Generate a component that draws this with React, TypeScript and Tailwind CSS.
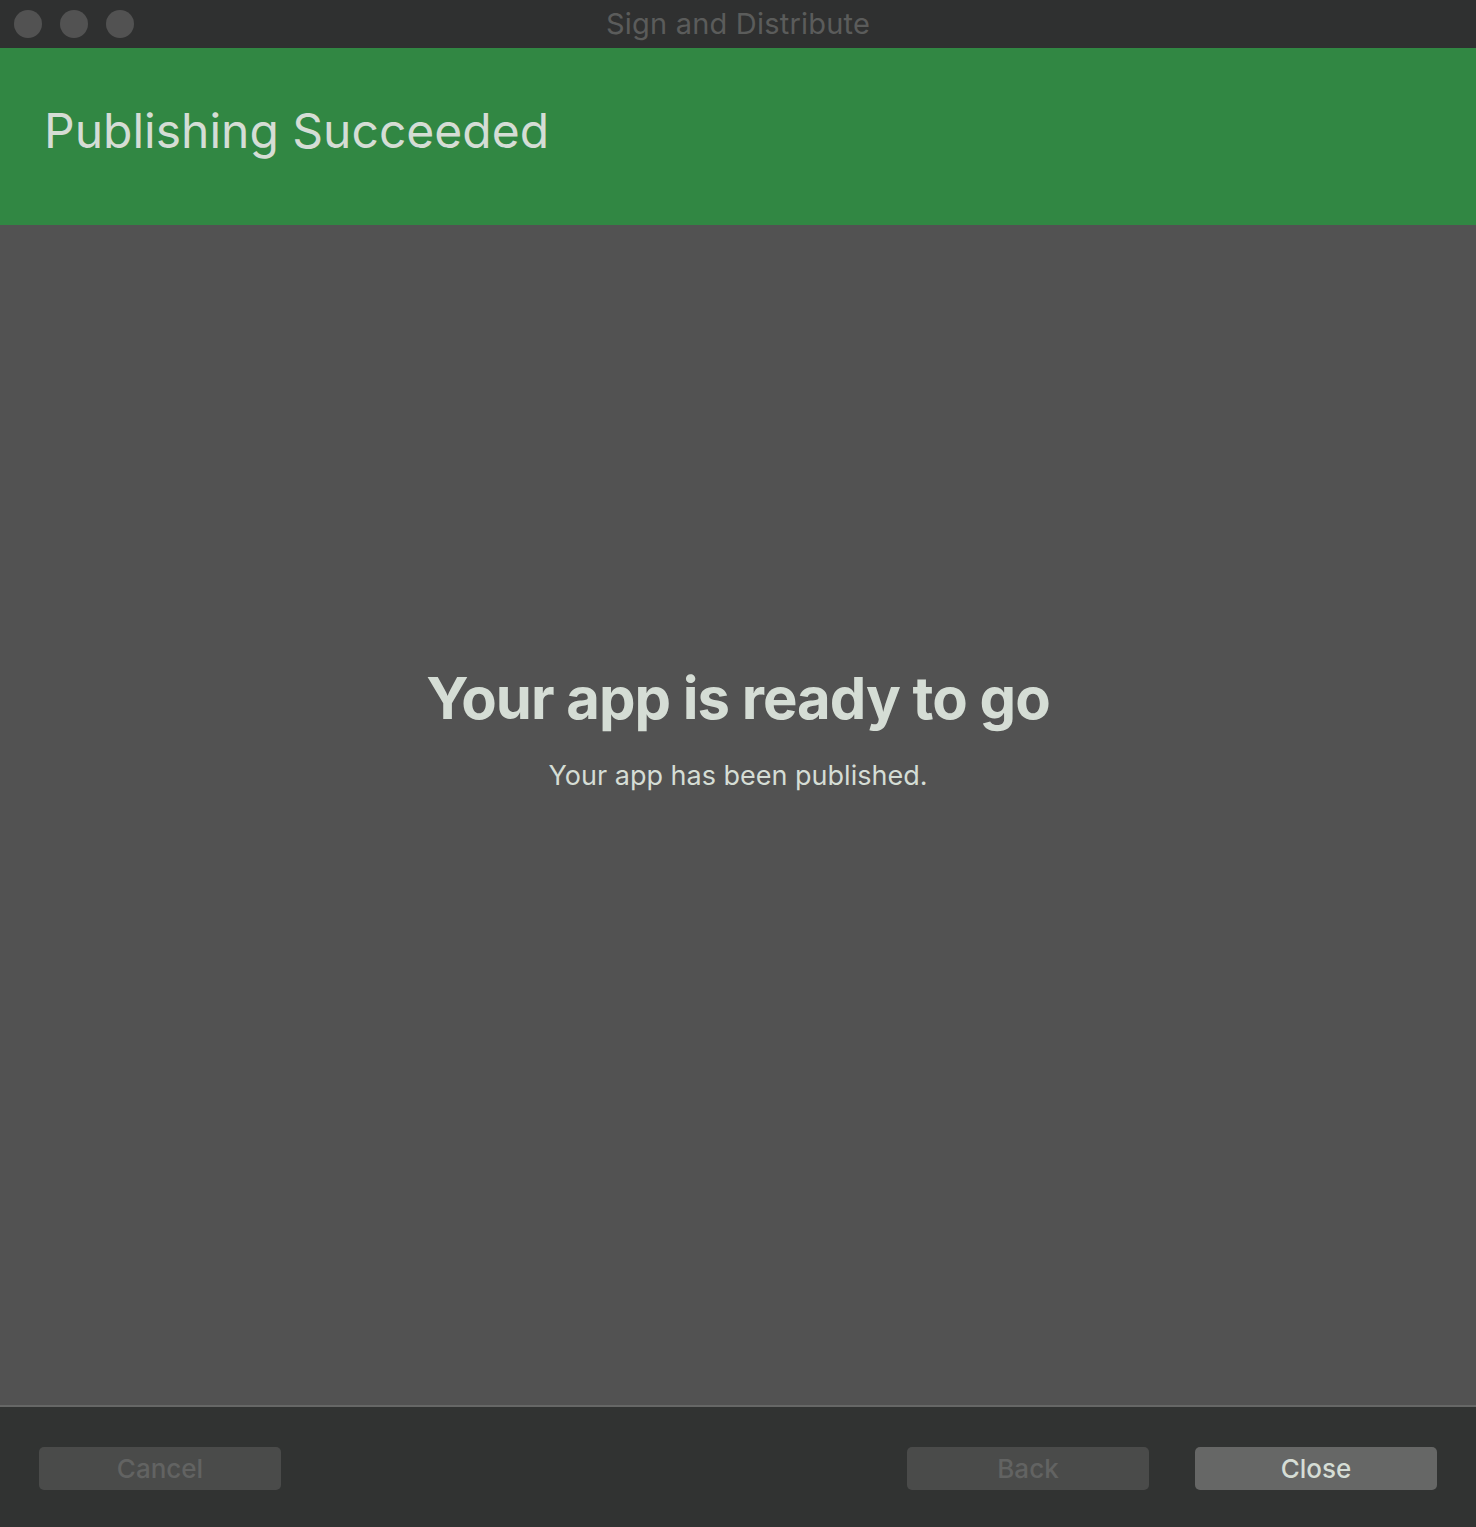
export default function App() {
  return (
    <div
      className="flex flex-col h-[1527px] w-full bg-[#525252]"
      style={{ fontFamily: "Inter, 'Noto Sans', sans-serif" }}
    >
      {/* Title bar */}
      <div className="relative flex items-center justify-center h-[48px] bg-[#2f3030] shrink-0">
        <div className="absolute left-[14px] top-[10px] flex gap-[18px]">
          <span className="w-[28px] h-[28px] rounded-full bg-[#525252]" />
          <span className="w-[28px] h-[28px] rounded-full bg-[#525252]" />
          <span className="w-[28px] h-[28px] rounded-full bg-[#525252]" />
        </div>
        <span className="text-[29px] text-[#5b5c5b] tracking-[0.2px]">Sign and Distribute</span>
      </div>

      {/* Header banner */}
      <div className="flex items-center h-[177px] bg-[#318743] shrink-0 pl-[44px] pb-[12px]">
        <h1 className="text-[48px] text-[#d5ddd5] font-normal">Publishing Succeeded</h1>
      </div>

      {/* Content */}
      <div className="flex-1 flex flex-col items-center justify-center bg-[#525252] pb-[164px]">
        <h2 className="text-[58px] font-bold text-[#d5ddd5] tracking-[-1px] leading-none">
          Your app is ready to go
        </h2>
        <p className="mt-[29px] text-[27px] text-[#d5ddd5]">Your app has been published.</p>
      </div>

      {/* Footer */}
      <div className="flex items-center justify-between h-[122px] bg-[#313332] border-t-[2px] border-[#666766] shrink-0 px-[39px] pt-[2px]">
        <button className="w-[242px] h-[43px] rounded-[5px] bg-[#4a4b4a] text-[26px] text-[#626362] font-medium">
          Cancel
        </button>
        <div className="flex gap-[46px]">
          <button className="w-[242px] h-[43px] rounded-[5px] bg-[#4a4b4a] text-[26px] text-[#626362] font-medium">
            Back
          </button>
          <button className="w-[242px] h-[43px] rounded-[5px] bg-[#666766] text-[26px] text-[#d5ddd5] font-medium">
            Close
          </button>
        </div>
      </div>
    </div>
  );
}
